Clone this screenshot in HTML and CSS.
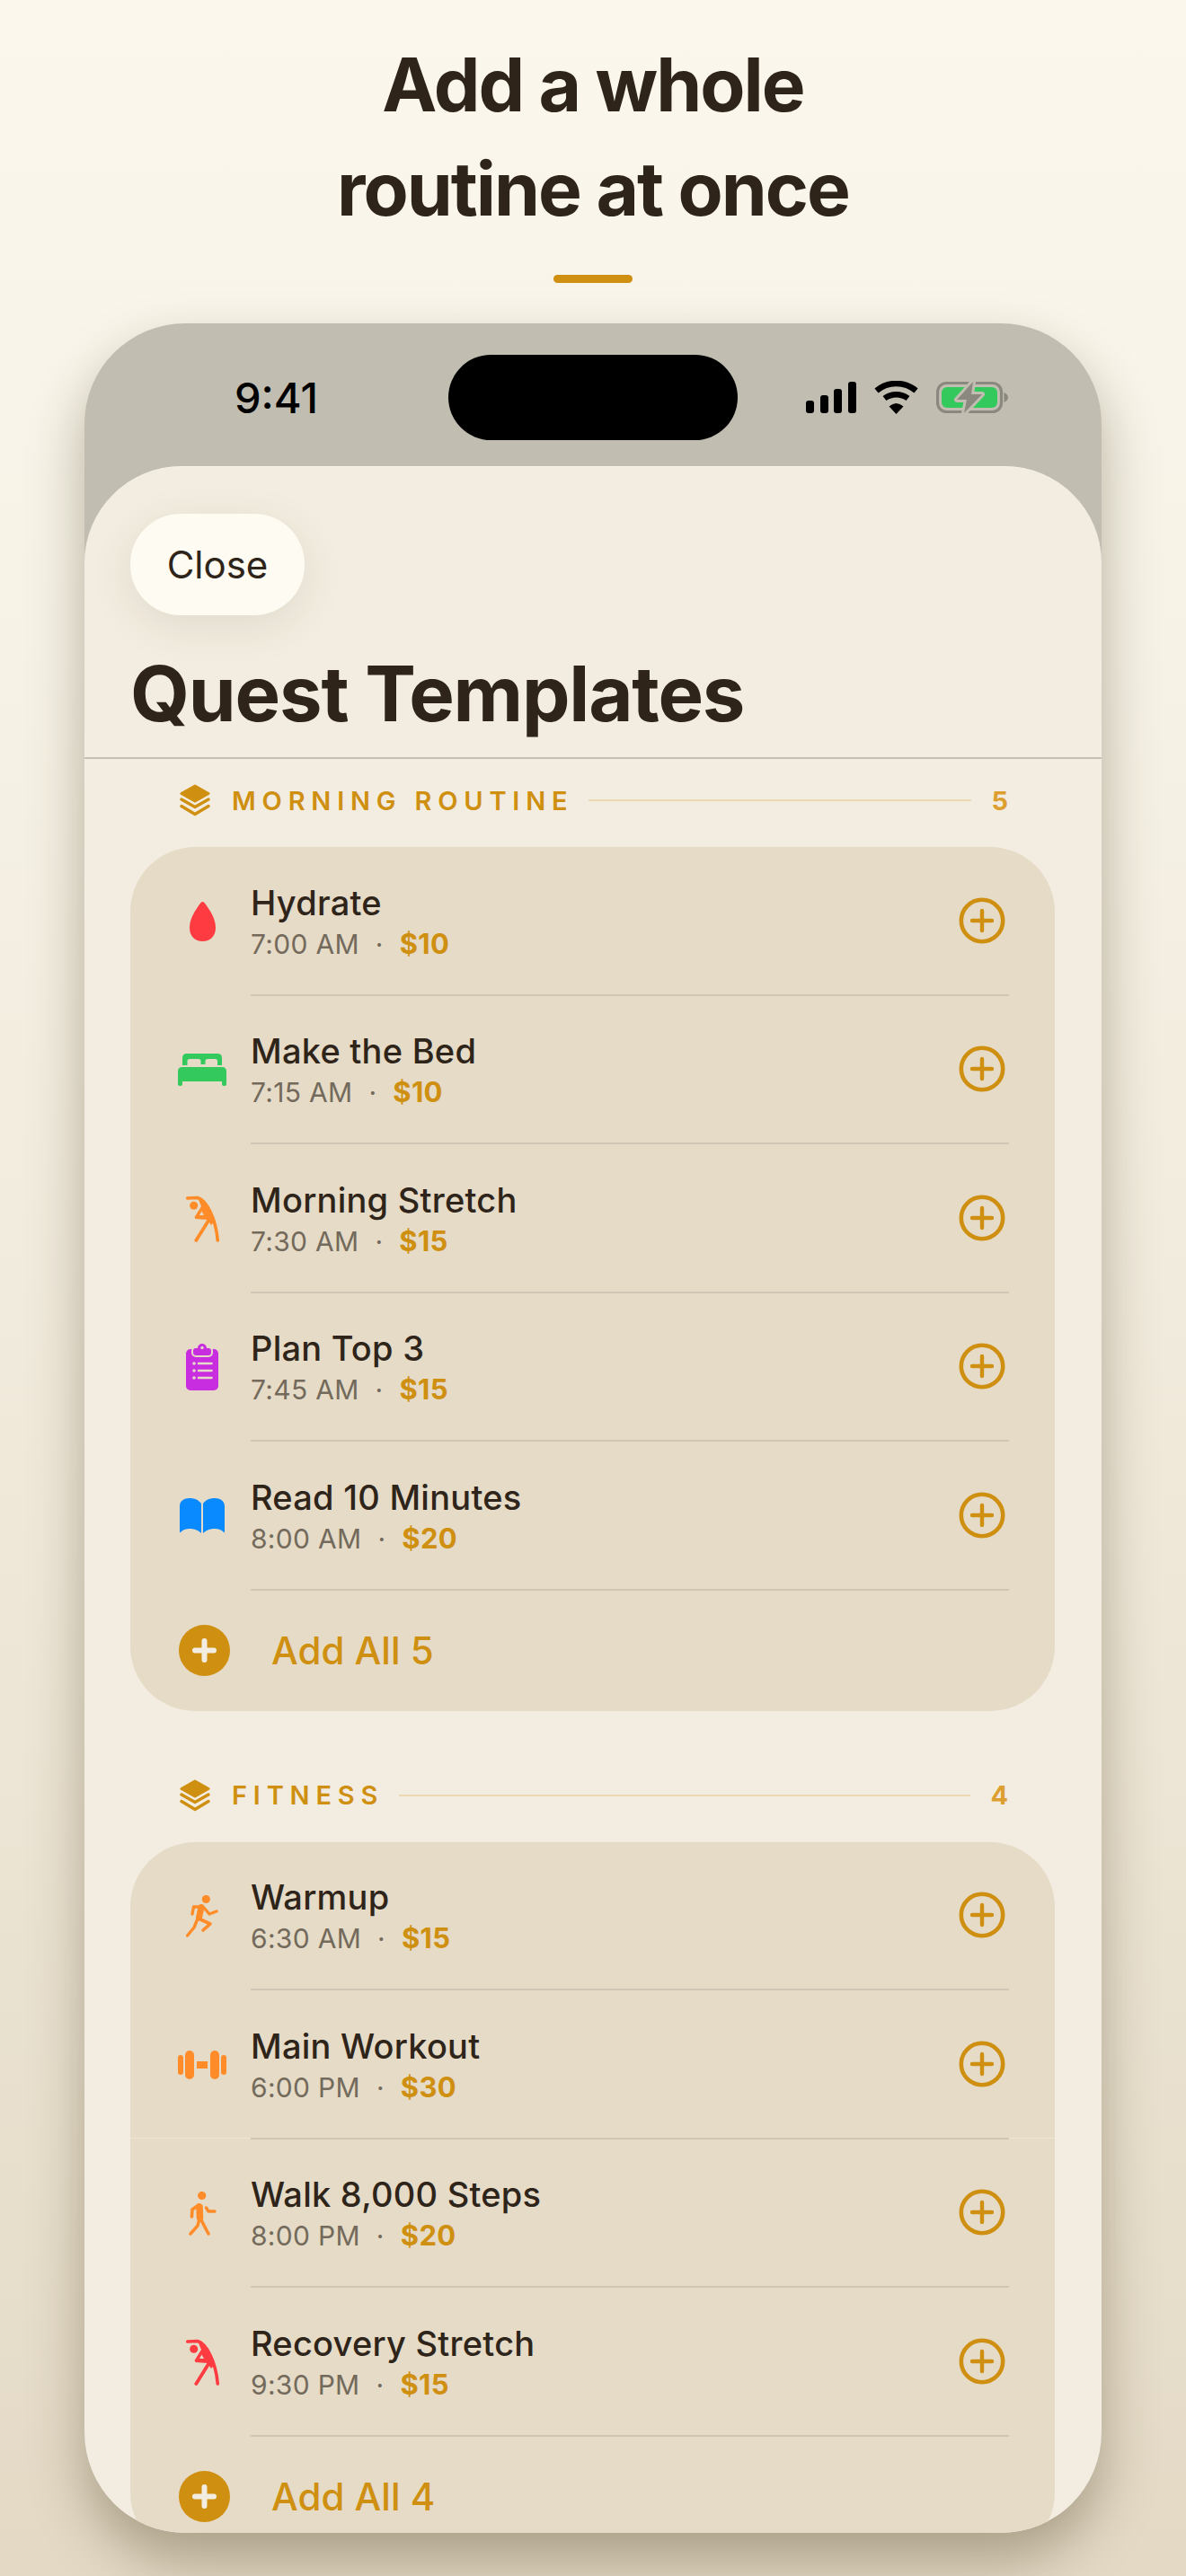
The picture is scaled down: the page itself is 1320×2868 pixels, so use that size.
FILE: index.html
```html
<!DOCTYPE html>
<html lang="en">
<head>
    <meta charset="UTF-8">
    <meta name="viewport" content="width=device-width, initial-scale=1.0">
    <title>Add a whole routine at once</title>
    <link rel="stylesheet" href="styles.css">
</head>
<body>
    <svg class="defs" width="0" height="0">
        <symbol id="layers" viewBox="0 0 34 36">
            <path d="M17 2 L32 10.5 L17 19 L2 10.5 Z" fill="currentColor" stroke="currentColor" stroke-width="3" stroke-linejoin="round"/>
            <path d="M2 17 L17 25.500 L32 17" fill="none" stroke="currentColor" stroke-width="3.4" stroke-linejoin="round" stroke-linecap="round"/>
            <path d="M2 24.500 L17 33.500 L32 24.500" fill="none" stroke="currentColor" stroke-width="3.4" stroke-linejoin="round" stroke-linecap="round"/>
        </symbol>
        <symbol id="add" viewBox="0 0 52 52">
            <circle cx="26" cy="26" r="23.200" fill="none" stroke="currentColor" stroke-width="4.600"/>
            <path d="M15 26 H37 M26 15 V37" fill="none" stroke="currentColor" stroke-width="4.400" stroke-linecap="round"/>
        </symbol>
        <symbol id="add-fill" viewBox="0 0 57 57">
            <circle cx="28.500" cy="28.500" r="28.500" fill="currentColor"/>
            <path d="M18 28.500 H39 M28.500 18 V39" fill="none" stroke="#f3ede1" stroke-width="6" stroke-linecap="round"/>
        </symbol>
        <symbol id="stretch" viewBox="0 0 37 52">
            <circle cx="8.700" cy="11.300" r="4.500" fill="currentColor"/>
            <path d="M1.800 3 C5 2.600 9 2.500 13 2.500 C22 5 33 24 35.300 50" fill="none" stroke="currentColor" stroke-width="3.600" stroke-linecap="round"/>
            <path d="M13 1.500 C21 4 28 14 32.500 28 L28 33 L24 27 L10.500 26 L9.500 24 L17 12 L14.500 6 Z" fill="currentColor"/>
            <path d="M17.500 17.500 L15 22 L20 22 Z" class="cut"/>
            <path d="M25 28 L11.300 50" fill="none" stroke="currentColor" stroke-width="3.800" stroke-linecap="round"/>
        </symbol>
    </svg>

    <header class="promo">
        <h1 class="promo-title">Add a whole<br>routine at once</h1>
        <div class="promo-bar"></div>
    </header>

    <main class="phone">
        <div class="status-bar">
            <div class="status-time">9:41</div>
            <div class="island"></div>
            <div class="status-icons">
                <svg class="signal" width="56" height="35" viewBox="0 0 56 35">
                    <rect x="0" y="21" width="9" height="14" rx="3"/>
                    <rect x="16" y="15" width="9" height="20" rx="3"/>
                    <rect x="31" y="8" width="9" height="27" rx="3"/>
                    <rect x="47" y="0" width="9" height="35" rx="3"/>
                </svg>
                <svg class="wifi" width="49" height="37" viewBox="0 0 49 37">
                    <path d="M2.500 11 A34 34 0 0 1 46.500 11" fill="none" stroke="#000" stroke-width="6.500"/>
                    <path d="M11.500 19.500 A22 22 0 0 1 37.500 19.500" fill="none" stroke="#000" stroke-width="6.500"/>
                    <path d="M24.500 37 L16.500 28.500 Q24.500 21.500 32.500 28.500 Z" fill="#000"/>
                </svg>
                <svg class="battery" width="80" height="37" viewBox="0 0 80 37">
                    <rect x="1.500" y="2.500" width="71" height="32" rx="10" fill="none" stroke="#8b887f" stroke-width="3.200"/>
                    <rect x="6" y="7" width="62" height="23" rx="6" fill="#34c95d"/>
                    <path d="M75.500 13 C78 14 80 16 80 18.500 C80 21 78 23 75.500 24 Z" fill="#8b887f"/>
                    <path d="M41 1 L23 21 L34 21 L31 36 L51 15 L39 15 Z" fill="#8b887f" stroke="#c1bdb1" stroke-width="6" stroke-linejoin="round" paint-order="stroke"/>
                </svg>
            </div>
        </div>

        <div class="sheet">
            <button class="close-btn">Close</button>
            <h2 class="sheet-title">Quest Templates</h2>

            <section class="group group-first">
                <div class="group-head">
                    <svg class="group-icon"><use href="#layers"/></svg>
                    <span class="group-name">MORNING ROUTINE</span>
                    <span class="group-line"></span>
                    <span class="group-count">5</span>
                </div>
                <div class="card">
                    <div class="row">
                        <div class="row-icon">
                            <svg class="red" width="29" height="44" viewBox="0 0 29 44"><path d="M14.500 0 C16 0 17 1.500 18 3 C22 9 29 18 29 29 C29 38 23 44 14.500 44 C6 44 0 38 0 29 C0 18 7 9 11 3 C12 1.500 13 0 14.500 0 Z" fill="currentColor"/></svg>
                        </div>
                        <div class="row-body">
                            <div class="row-text">
                                <div class="row-title">Hydrate</div>
                                <div class="row-meta"><span>7:00 AM</span><span class="dot">·</span><span class="price">$10</span></div>
                            </div>
                            <svg class="row-add"><use href="#add"/></svg>
                        </div>
                    </div>
                    <div class="row">
                        <div class="row-icon">
                            <svg class="green" width="54" height="36" viewBox="0 0 54 36"><path fill-rule="evenodd" d="M5 13 V5 Q5 0 10 0 H44 Q49 0 49 5 V13 H44 V8.500 Q44 6 41.500 6 H33 Q30.500 6 30.500 8.500 V12 H25.500 V8.500 Q25.500 6 23 6 H13 Q10.500 6 10.500 8.500 V13 Z M5 15 H49 Q54 15 54 20 V34 Q54 36 52 36 H51 Q49 36 49 34 V31 H5 V34 Q5 36 3 36 H2 Q0 36 0 34 V20 Q0 15 5 15 Z" fill="currentColor"/></svg>
                        </div>
                        <div class="row-body">
                            <div class="row-text">
                                <div class="row-title">Make the Bed</div>
                                <div class="row-meta"><span>7:15 AM</span><span class="dot">·</span><span class="price">$10</span></div>
                            </div>
                            <svg class="row-add"><use href="#add"/></svg>
                        </div>
                    </div>
                    <div class="row">
                        <div class="row-icon">
                            <svg class="orange stretch-icon"><use href="#stretch"/></svg>
                        </div>
                        <div class="row-body">
                            <div class="row-text">
                                <div class="row-title">Morning Stretch</div>
                                <div class="row-meta"><span>7:30 AM</span><span class="dot">·</span><span class="price">$15</span></div>
                            </div>
                            <svg class="row-add"><use href="#add"/></svg>
                        </div>
                    </div>
                    <div class="row">
                        <div class="row-icon">
                            <svg class="magenta" width="36" height="52" viewBox="0 0 36 52">
                                <rect x="0" y="6" width="36" height="46" rx="5" fill="currentColor"/>
                                <rect x="7" y="4" width="22" height="10" rx="4" fill="currentColor" stroke="#e5dbc7" stroke-width="2"/>
                                <circle cx="18" cy="5" r="5" fill="currentColor"/>
                                <circle cx="18" cy="4.500" r="1.700" fill="#e5dbc7"/>
                                <path d="M14 22 H28.500 M14 30 H28.500 M14 38 H28.500" stroke="#e5dbc7" stroke-width="2.600" stroke-linecap="round"/>
                                <circle cx="9" cy="22" r="1.800" fill="#e5dbc7"/>
                                <circle cx="9" cy="30" r="1.800" fill="#e5dbc7"/>
                                <circle cx="9" cy="38" r="1.800" fill="#e5dbc7"/>
                            </svg>
                        </div>
                        <div class="row-body">
                            <div class="row-text">
                                <div class="row-title">Plan Top 3</div>
                                <div class="row-meta"><span>7:45 AM</span><span class="dot">·</span><span class="price">$15</span></div>
                            </div>
                            <svg class="row-add"><use href="#add"/></svg>
                        </div>
                    </div>
                    <div class="row">
                        <div class="row-icon">
                            <svg class="blue" width="50" height="40" viewBox="0 0 50 40">
                                <path d="M0 9 C0 3 5 0 11 0 C17 0 21 2 24 6 V39 C20 35 15 34 11 34 C7 34 3 35.500 1 38 C.5 38.500 0 38 0 37 Z" fill="currentColor"/>
                                <path d="M50 9 C50 3 45 0 39 0 C33 0 29 2 26 6 V39 C30 35 35 34 39 34 C43 34 47 35.500 49 38 C49.500 38.500 50 38 50 37 Z" fill="currentColor"/>
                            </svg>
                        </div>
                        <div class="row-body">
                            <div class="row-text">
                                <div class="row-title">Read 10 Minutes</div>
                                <div class="row-meta"><span>8:00 AM</span><span class="dot">·</span><span class="price">$20</span></div>
                            </div>
                            <svg class="row-add"><use href="#add"/></svg>
                        </div>
                    </div>
                    <div class="add-all">
                        <svg class="add-all-icon"><use href="#add-fill"/></svg>
                        <span>Add All 5</span>
                    </div>
                </div>
            </section>

            <section class="group">
                <div class="group-head">
                    <svg class="group-icon"><use href="#layers"/></svg>
                    <span class="group-name">FITNESS</span>
                    <span class="group-line"></span>
                    <span class="group-count">4</span>
                </div>
                <div class="card">
                    <div class="row">
                        <div class="row-icon">
                            <svg class="orange" width="36" height="47" viewBox="0 0 36 47">
                                <circle cx="22.300" cy="4.500" r="4.600" fill="currentColor"/>
                                <g fill="none" stroke="currentColor" stroke-linecap="round" stroke-linejoin="round">
                                    <path d="M17 13.500 L14.500 25" stroke-width="7"/>
                                    <path d="M16 13 H8.500 L7 21" stroke-width="3.400"/>
                                    <path d="M20 14 L26 21 L34 18" stroke-width="3.400"/>
                                    <path d="M13 26 L9 36 L1.500 45" stroke-width="3.400"/>
                                    <path d="M14 26 L27 32 L19 39" stroke-width="3.600"/>
                                </g>
                            </svg>
                        </div>
                        <div class="row-body">
                            <div class="row-text">
                                <div class="row-title">Warmup</div>
                                <div class="row-meta"><span>6:30 AM</span><span class="dot">·</span><span class="price">$15</span></div>
                            </div>
                            <svg class="row-add"><use href="#add"/></svg>
                        </div>
                    </div>
                    <div class="row">
                        <div class="row-icon">
                            <svg class="orange" width="54" height="32" viewBox="0 0 54 32" fill="currentColor">
                                <rect x="0" y="5" width="6" height="22" rx="3"/>
                                <rect x="8" y="0" width="10" height="32" rx="5"/>
                                <rect x="21" y="12" width="12" height="8"/>
                                <rect x="36" y="0" width="10" height="32" rx="5"/>
                                <rect x="48" y="5" width="6" height="22" rx="3"/>
                            </svg>
                        </div>
                        <div class="row-body">
                            <div class="row-text">
                                <div class="row-title">Main Workout</div>
                                <div class="row-meta"><span>6:00 PM</span><span class="dot">·</span><span class="price">$30</span></div>
                            </div>
                            <svg class="row-add"><use href="#add"/></svg>
                        </div>
                    </div>
                    <div class="row">
                        <div class="row-icon">
                            <svg class="orange" width="31" height="49" viewBox="0 0 31 49">
                                <circle cx="14.700" cy="4.500" r="4.600" fill="currentColor"/>
                                <g fill="none" stroke="currentColor" stroke-linecap="round" stroke-linejoin="round">
                                    <path d="M12 17 L12.500 29" stroke-width="7.500"/>
                                    <path d="M11 15 L4 20 L3.500 28" stroke-width="3.600"/>
                                    <path d="M19.500 18 L22 22 H29" stroke-width="3.400"/>
                                    <path d="M12 30 L10 38 L2 47" stroke-width="3.400"/>
                                    <path d="M12.500 29 L22 47" stroke-width="3.600"/>
                                </g>
                            </svg>
                        </div>
                        <div class="row-body">
                            <div class="row-text">
                                <div class="row-title">Walk 8,000 Steps</div>
                                <div class="row-meta"><span>8:00 PM</span><span class="dot">·</span><span class="price">$20</span></div>
                            </div>
                            <svg class="row-add"><use href="#add"/></svg>
                        </div>
                    </div>
                    <div class="row">
                        <div class="row-icon">
                            <svg class="red stretch-icon"><use href="#stretch"/></svg>
                        </div>
                        <div class="row-body">
                            <div class="row-text">
                                <div class="row-title">Recovery Stretch</div>
                                <div class="row-meta"><span>9:30 PM</span><span class="dot">·</span><span class="price">$15</span></div>
                            </div>
                            <svg class="row-add"><use href="#add"/></svg>
                        </div>
                    </div>
                    <div class="add-all">
                        <svg class="add-all-icon"><use href="#add-fill"/></svg>
                        <span>Add All 4</span>
                    </div>
                </div>
            </section>
            <div class="seam seam-left"></div>
            <div class="seam seam-right"></div>
        </div>
    </main>
</body>
</html>
```

FILE: styles.css
```css
* {
    box-sizing: border-box;
}
html, body {
    margin: 0;
    padding: 0;
}
body {
    width: 1320px;
    height: 2868px;
    overflow: hidden;
    font-family: Inter, "Noto Sans", sans-serif;
    color: #2e2419;
    background: linear-gradient(180deg, #fbf7ed 0%, #f6f2e6 25%, #efe8d9 60%, #e3d9c5 100%);
}
.defs {
    position: absolute;
}
.cut {
    fill: #e5dbc7;
}

/* promo header */
.promo {
    height: 360px;
    padding-top: 37px;
    text-align: center;
}
.promo-title {
    margin: 0;
    font-size: 82px;
    font-weight: 700;
    line-height: 116px;
    letter-spacing: -2px;
}
.promo-bar {
    width: 88px;
    height: 9px;
    margin: 37px auto 0;
    border-radius: 5px;
    background-color: #cf8f10;
}

/* phone frame */
.phone {
    position: relative;
    height: 2460px;
    margin: 0 94px;
    border-radius: 112px;
    background-color: #c1bdb1;
    box-shadow: 0 30px 60px rgba(70, 55, 25, 0.36);
    overflow: hidden;
}
.status-bar {
    display: grid;
    grid-template-columns: 1fr 322px 1fr;
    align-items: center;
    height: 159px;
    padding-top: 6px;
}
.status-time {
    padding-left: 167px;
    font-size: 47px;
    font-weight: 540;
    color: #000;
}
.island {
    height: 95px;
    border-radius: 48px;
    background-color: #000;
}
.status-icons {
    display: flex;
    align-items: center;
    padding-left: 76px;
}
.signal {
    fill: #000;
    margin-right: 20px;
}
.wifi {
    margin-right: 20px;
}

/* sheet */
.sheet {
    height: 2301px;
    padding-top: 52px;
    border-top: 1px solid #f8f4ea;
    border-radius: 108px 108px 0 0;
    background-color: #f3ede1;
    overflow: hidden;
    position: relative;
}
.close-btn {
    display: block;
    width: 194px;
    height: 113px;
    margin-left: 51px;
    border: none;
    border-radius: 56px;
    background-color: #fefbf2;
    box-shadow: 0 12px 48px rgba(70, 55, 25, 0.1);
    font-family: inherit;
    font-size: 42px;
    color: #2e2419;
}
.sheet-title {
    margin: 0;
    height: 160px;
    padding: 32px 0 0 51px;
    border-bottom: 2px solid #c4c0b3;
    font-size: 85px;
    font-weight: 700;
    line-height: 112px;
    letter-spacing: -1.2px;
}

/* groups */
.group {
    margin-top: 68px;
}
.group-first {
    margin-top: 20px;
}
.group-head {
    display: flex;
    align-items: center;
    height: 52px;
    margin-bottom: 26px;
    padding: 0 104px 0 106px;
}
.group-icon {
    width: 34px;
    height: 36px;
    color: #cf8f10;
    margin-right: 24px;
}
.group-name {
    font-size: 29px;
    font-weight: 600;
    letter-spacing: 6.800px;
    color: #cf8f10;
}
.group-line {
    flex: 1;
    height: 2px;
    margin: 0 22px 0 17px;
    background-color: #ecd9b4;
}
.group-count {
    font-size: 29px;
    font-weight: 700;
    color: #dc9f30;
}
.card {
    margin: 0 52px 0 51px;
    border-radius: 72px;
    background-color: #e5dbc7;
}
.row {
    display: flex;
    height: 165.5px;
}
.row-icon {
    display: flex;
    align-items: center;
    justify-content: center;
    flex: none;
    width: 80px;
    margin: 0 14px 0 40px;
}
.row-body {
    display: flex;
    align-items: center;
    flex: 1;
    margin-right: 51px;
    padding-right: 4px;
    border-bottom: 2.5px solid #cfc6b5;
}
.row-text {
    flex: 1;
    padding-top: 3px;
}
.row-title {
    font-size: 38px;
    font-weight: 540;
    line-height: 46px;
    letter-spacing: 0.25px;
}
.row-meta {
    display: flex;
    align-items: center;
    gap: 18px;
    margin-top: 3px;
    font-size: 30px;
    line-height: 40px;
    letter-spacing: 0.3px;
    color: #736a5c;
}
.price {
    font-size: 31px;
    font-weight: 700;
    color: #cf8f10;
}
.row-add {
    width: 52px;
    height: 52px;
    color: #cf8f10;
}
.add-all {
    display: flex;
    align-items: center;
    height: 134px;
    padding-left: 54px;
    font-size: 42px;
    font-weight: 500;
    color: #cf8f10;
}
.add-all-icon {
    width: 57px;
    height: 57px;
    margin-right: 46px;
}
.stretch-icon {
    width: 37px;
    height: 52px;
}

/* thin light seam across the second card in the screenshot */
.seam {
    position: absolute;
    top: 1860px;
    height: 1px;
    background-color: #f0e6d6;
}
.seam-left {
    left: 51px;
    width: 134px;
}
.seam-right {
    left: 1029px;
    width: 51px;
}

/* icon colours */
.red { color: #ff3b42; }
.green { color: #34c95d; }
.orange { color: #ff8c28; }
.magenta { color: #c92de0; }
.blue { color: #0a8aff; }
```
